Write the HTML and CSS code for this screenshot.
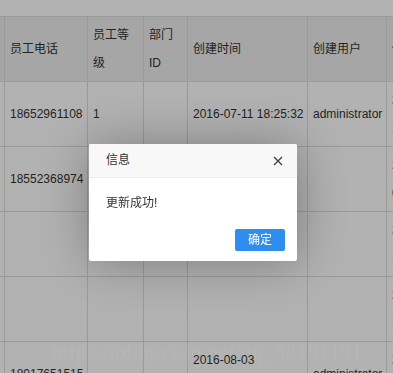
FILE: index.html
```html
<!DOCTYPE html>
<html lang="zh-CN">
<head>
  <meta charset="UTF-8">
  <meta name="viewport" content="width=device-width, initial-scale=1.0">
  <title>员工列表</title>
  <link rel="stylesheet" href="styles.css">
</head>
<body>
  <div class="page">
    <table class="grid">
      <colgroup>
        <col class="c-name">
        <col class="c-phone">
        <col class="c-level">
        <col class="c-dept">
        <col class="c-time">
        <col class="c-user">
        <col class="c-mtime">
      </colgroup>
      <thead>
        <tr>
          <th>员工姓名</th>
          <th>员工电话</th>
          <th>员工等级</th>
          <th>部门ID</th>
          <th>创建时间</th>
          <th>创建用户</th>
          <th>修改时间</th>
        </tr>
      </thead>
      <tbody>
        <tr>
          <td>张伟</td>
          <td>18652961108</td>
          <td>1</td>
          <td></td>
          <td>2016-07-11 18:25:32</td>
          <td>administrator</td>
          <td>2016-07-11<br>18:25:32</td>
        </tr>
        <tr>
          <td>李娜</td>
          <td>18552368974</td>
          <td></td>
          <td></td>
          <td></td>
          <td></td>
          <td>2016-07-12<br>09:14:08</td>
        </tr>
        <tr>
          <td></td>
          <td></td>
          <td></td>
          <td></td>
          <td></td>
          <td></td>
          <td>2016-07-20<br>14:02:51</td>
        </tr>
        <tr>
          <td></td>
          <td></td>
          <td></td>
          <td></td>
          <td></td>
          <td></td>
          <td>2016-07-28<br>16:40:19</td>
        </tr>
        <tr>
          <td>王强</td>
          <td>18017651515</td>
          <td></td>
          <td></td>
          <td>2016-08-03 10:47:15.0</td>
          <td>administrator</td>
          <td>2016-08-03<br>10:47:15</td>
        </tr>
      </tbody>
    </table>
  </div>

  <div class="shade"></div>

  <div class="layer">
    <div class="layer-title">
      信息
      <span class="layer-close">
        <svg width="10" height="10" viewBox="0 0 10 10">
          <path d="M1 1L9 9M9 1L1 9" stroke="#444" stroke-width="1.4" fill="none"/>
        </svg>
      </span>
    </div>
    <div class="layer-content">更新成功!</div>
    <div class="layer-btns">
      <a class="layer-btn">确定</a>
    </div>
  </div>

  <div class="watermark">https://blog.csdn.net/qq_38191191</div>
</body>
</html>
```

FILE: styles.css
```css
body {
  margin: 0;
  overflow: hidden;
  font-family: "Liberation Sans", "Noto Sans CJK SC", sans-serif;
  font-size: 12px;
  color: #333;
  background: #fff;
}

.page { padding-top: 16px; }

.grid {
  border-collapse: collapse;
  table-layout: fixed;
  width: 526px;
  margin-left: -60px;
}
.c-name { width: 64px; }
.c-phone { width: 83px; }
.c-level { width: 56px; }
.c-dept { width: 44px; }
.c-time { width: 120px; }
.c-user { width: 79px; }
.c-mtime { width: 80px; }

.grid th, .grid td {
  border: 1px solid #ddd;
  padding: 4px 2px 4px 5px;
  line-height: 28px;
  text-align: left;
  vertical-align: middle;
  font-weight: normal;
}
.grid th { background: #eee; height: 56px; padding-right: 5px; }
.grid td { height: 55px; }

.shade {
  position: fixed;
  inset: 0;
  background: rgba(0, 0, 0, 0.3);
}

.layer {
  position: fixed;
  left: 89px;
  top: 144px;
  width: 208px;
  background: #fff;
  border-radius: 2px;
  box-shadow: 1px 1px 50px rgba(0, 0, 0, 0.3);
}
.layer-title {
  position: relative;
  height: 33px;
  line-height: 33px;
  padding-left: 17px;
  background: #f8f8f8;
  border-bottom: 1px solid #eee;
  border-radius: 2px 2px 0 0;
  color: #333;
}
.layer-close {
  position: absolute;
  right: 14px;
  top: 12px;
  width: 10px;
  height: 10px;
  line-height: 0;
}
.layer-content {
  padding: 16px 17px;
  line-height: 19px;
}
.layer-btns {
  padding: 0 12px 10px;
  text-align: right;
}
.layer-btn {
  display: inline-block;
  width: 50px;
  height: 22px;
  line-height: 22px;
  text-align: center;
  background: #2e8ded;
  color: #fff;
  border-radius: 2px;
}

.watermark {
  position: fixed;
  left: 52px;
  top: 340px;
  font-family: "Liberation Serif", serif;
  font-size: 21px;
  letter-spacing: 0.6px;
  color: rgba(255, 255, 255, 0.06);
  white-space: nowrap;
}
```
